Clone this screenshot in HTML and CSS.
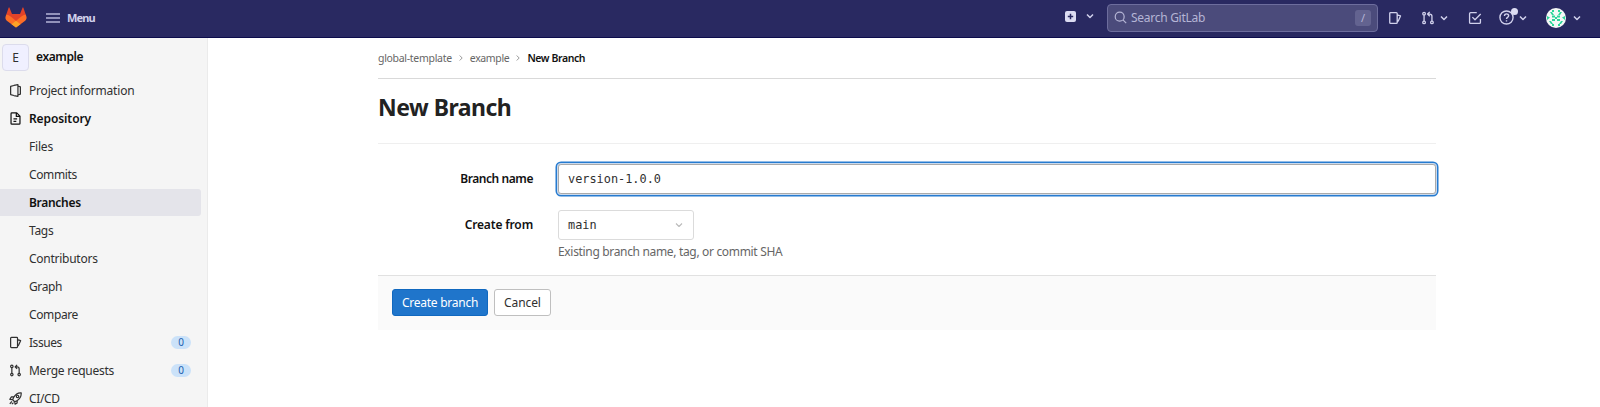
FILE: index.html
```html
<!DOCTYPE html>
<html lang="en">
<head>
<meta charset="utf-8">
<title>New Branch · example · GitLab</title>
<link rel="stylesheet" href="styles.css">
</head>
<body>
<svg class="sprite" aria-hidden="true">
  <symbol id="chevron" viewBox="0 0 16 16"><path d="M4 6l4 4 4-4"/></symbol>
  <symbol id="issues" viewBox="0 0 16 16"><path d="M3 1.800h6.500a1 1 0 0 1 1 1v10.400a1 1 0 0 1-1 1H3a1 1 0 0 1-1-1V2.800a1 1 0 0 1 1-1zM10.500 4.500l3.800 1.200-2.300 5.200-1.500 1.800"/></symbol>
  <symbol id="merge" viewBox="0 0 16 16"><circle cx="3.500" cy="3" r="1.500"/><circle cx="3.500" cy="13" r="1.500"/><circle cx="12.500" cy="13" r="1.500"/><path d="M3.500 4.500v7M12.500 11.500V6a2.500 2.500 0 0 0-2.500-2.500H8M10 1L7.500 3.500 10 6"/></symbol>
</svg>
<header class="navbar">
  <svg class="logo" viewBox="0 0 22 21">
    <path fill="#e24329" d="M1.300 7.600L3.600.7Q4 0 4.500.7L7 7h8L17.500.7q.5-.7.900 0l2.300 6.900L18 13l-7 7-7-7z"/>
    <path fill="#fc6d26" d="M1.300 7.400C4.500 8 7.500 10.500 11 14c3.500-3.500 6.500-6 9.700-6.600l.7 2.100c.5 1.700 0 3.200-1.200 4.200L11 20.500l-9.200-6.800C.6 12.700.1 11.200.6 9.500z"/>
    <path fill="#fca326" d="M11 13.800l4.500 3.400-4.500 3.400-4.500-3.400z"/>
  </svg>
  <svg class="burger" viewBox="0 0 14 10"><path d="M0 1h14M0 5h14M0 9h14"/></svg>
  <span class="menu">Menu</span>
  <div class="tools">
    <svg class="plus" viewBox="0 0 11 11"><rect width="11" height="11" rx="2" fill="#dcdcf2"/><path d="M5.500 2.800v5.400M2.800 5.500h5.400" stroke="#292961" stroke-width="1.500"/></svg>
    <svg class="icon chev c1"><use href="#chevron"/></svg>
    <div class="search">
      <svg class="icon glass" viewBox="0 0 16 16"><circle cx="7" cy="7" r="5.500"/><path d="M11 11l4 4"/></svg>
      <span class="hint">Search GitLab</span><kbd>/</kbd>
    </div>
    <svg class="icon i-issues"><use href="#issues"/></svg>
    <svg class="icon i-merge"><use href="#merge"/></svg>
    <svg class="icon chev c2"><use href="#chevron"/></svg>
    <svg class="icon i-todo" viewBox="0 0 16 16"><path d="M10 1.800H3a1.200 1.200 0 0 0-1.200 1.200v10A1.200 1.200 0 0 0 3 14.200h10a1.200 1.200 0 0 0 1.200-1.200V9M5 7l3 3 6.500-6.500"/></svg>
    <span class="help">
      <svg class="icon" viewBox="0 0 16 16"><circle cx="8" cy="8" r="7"/><path d="M5.800 6.300c0-3 4.600-2.800 4.500-.1C10.300 7.800 8 7.900 8 9.500M8 10.800v1.500"/></svg>
      <i class="dot"></i>
    </span>
    <svg class="icon chev c3"><use href="#chevron"/></svg>
    <svg class="avatar" viewBox="0 0 20 20"><circle cx="10" cy="10" r="10" fill="#f4f8f6"/><path fill="#2bd69a" d="M6 2h2v2H6zM12 2h2v2h-2zM4 4h2l2 3H6zM16 4h-2l-2 3h2zM1 8l3 1.500L1 12zM19 8l-3 1.500 3 2.500zM6 7.500h3v2H6zM11 7.500h3v2h-3zM6 11h3v2H6zM11 11h3v2h-3zM9 9h2v2H9zM3 13h2l2 3H5zM17 13h-2l-2 3h2zM6 16h2v2H6zM12 16h2v2h-2z"/></svg>
    <svg class="icon chev c4"><use href="#chevron"/></svg>
  </div>
</header>
<div class="page">
  <nav class="sidebar">
    <div class="project"><span class="tile">E</span><b>example</b></div>
    <a class="item"><svg class="icon" viewBox="0 0 16 16"><path d="M6 1.800L2 3v10l4 1.200M6 1.800l5-1V15.200l-5-1M11 2.500L14 3.500v9l-3 1"/></svg><span class="t-info">Project information</span></a>
    <a class="item bold"><svg class="icon" viewBox="0 0 16 16"><path d="M3.500 1h6l4 4v9a1 1 0 0 1-1 1h-9a1 1 0 0 1-1-1V2a1 1 0 0 1 1-1zM9 1v4.500h4.500M5.500 8.500H10M5.500 11.500H9"/></svg><span class="t-repo">Repository</span></a>
    <a class="item sub"><span class="t-files">Files</span></a>
    <a class="item sub"><span class="t-commits">Commits</span></a>
    <a class="item sub bold active"><span class="t-branches">Branches</span></a>
    <a class="item sub"><span class="t-tags">Tags</span></a>
    <a class="item sub"><span class="t-contrib">Contributors</span></a>
    <a class="item sub"><span class="t-graph">Graph</span></a>
    <a class="item sub"><span class="t-compare">Compare</span></a>
    <a class="item"><svg class="icon"><use href="#issues"/></svg><span class="t-issues">Issues</span><em>0</em></a>
    <a class="item"><svg class="icon"><use href="#merge"/></svg><span class="t-mr">Merge requests</span><em>0</em></a>
    <a class="item"><svg class="icon" viewBox="0 0 16 16"><path d="M15 1c-4-.3-7 1.500-9.500 6L4.500 9.500l2.500 2.500 2.500-1C13.500 8.500 15.300 5 15 1zM6 6H3L1 9l3.500.5M10 10.500v3L7.500 15 7 12M3.500 11.500L1 14.500M5.500 13l-2 2"/><circle cx="10.500" cy="5.500" r="1.500"/></svg><span class="t-ci">CI/CD</span></a>
  </nav>
  <main class="content">
    <div class="crumbs">
      <span class="t-global">global-template</span>
      <svg class="sep" viewBox="0 0 4 6"><path d="M.7.5L3.200 3 .7 5.500"/></svg>
      <span class="t-ex">example</span>
      <svg class="sep" viewBox="0 0 4 6"><path d="M.7.5L3.200 3 .7 5.500"/></svg>
      <b class="t-new">New Branch</b>
    </div>
    <h1>New Branch</h1>
    <form>
      <div class="row name">
        <label><span class="t-bname">Branch name</span></label>
        <div class="field focus">version-1.0.0</div>
      </div>
      <div class="row from">
        <label><span class="t-from">Create from</span></label>
        <div class="field select">main<svg class="icon"><use href="#chevron"/></svg></div>
      </div>
      <p class="note"><span class="t-note">Existing branch name, tag, or commit SHA</span></p>
      <div class="actions">
        <button type="button" class="btn primary"><span class="t-create">Create branch</span></button>
        <button type="button" class="btn"><span class="t-cancel">Cancel</span></button>
      </div>
    </form>
  </main>
</div>
</body>
</html>
```
FILE: styles.css
```css
* { box-sizing: border-box; }
body { margin: 0; height: 407px; overflow: hidden; background: #fff; color: #303030; font: 12px/16px "Noto Sans", "Open Sans", sans-serif; }
b, .bold { font-weight: 600; color: #111; }
span, b { white-space: nowrap; }
.sprite { position: absolute; width: 0; height: 0; }
.icon { width: 13px; height: 13px; flex: none; fill: none; stroke: currentColor; stroke-width: 1.5; stroke-linejoin: round; }
.navbar { height: 38px; background: #292961; border-bottom: 1px solid #0c0c4c; display: flex; align-items: center; padding: 0 0 2px 5px; color: #d1d1ec; }
.logo { width: 22px; height: 21px; }
.burger { width: 14px; height: 10px; margin-left: 19px; stroke: #b5b5d8; stroke-width: 1.3; }
.menu { margin-left: 7px; font-size: 11px; font-weight: 700; letter-spacing: -1px; letter-spacing: -.9px; }
.tools { margin-left: auto; display: flex; align-items: center; }
.plus { width: 11px; height: 11px; margin-top: -3px; }
.chev { width: 12px; height: 12px; stroke-width: 2; }
.c1 { margin: -3px 11px 0 8px; }
.search { width: 271px; height: 28px; border: 1px solid #6d6d9d; border-radius: 4px; background: #4b4b7b; display: flex; align-items: center; padding: 0 6px; color: #b5b5d5; }
.glass { width: 13px; height: 13px; }
.hint { margin-left: 4px; letter-spacing: -.28px; }
kbd { margin-left: auto; width: 16px; height: 16px; border-radius: 3px; background: #636390; text-align: center; font: 11px/16px "Noto Sans", sans-serif; }
.i-issues { margin-left: 10px; width: 14px; height: 14px; }
.i-merge { margin-left: 19px; width: 14px; height: 14px; }
.c2 { margin-left: 3px; }
.i-todo { margin-left: 18px; width: 14px; height: 14px; }
.help { margin-left: 17px; width: 15px; height: 15px; position: relative; }
.help .icon { display: block; width: 15px; height: 15px; }
.dot { position: absolute; left: 12px; top: -2px; width: 7px; height: 7px; border-radius: 50%; background: #dcdcf2; }
.c3 { margin-left: 3px; }
.avatar { width: 20px; height: 20px; margin-left: 17px; }
.c4 { margin: 0 17px 0 5px; }
.page { display: flex; height: 369px; }
.sidebar { width: 208px; flex: none; overflow: hidden; background: #f5f5f5; border-right: 1px solid #ebebeb; }
.project { display: flex; align-items: center; height: 38px; padding-left: 2px; }
.tile { width: 27px; height: 27px; border: 1px solid #dcdcec; border-radius: 4px; background: #f0f0ff; line-height: 25px; text-align: center; }
.project b { margin-left: 7px; letter-spacing: -.4px; }
.item { display: flex; align-items: center; width: 201px; height: 27px; margin-bottom: 1px; padding-left: 9px; border-radius: 0 3px 3px 0; }
.project + .item { margin-top: 1px; }
.item .icon + span { margin-left: 7px; }
.item em { margin: 0 10px 0 auto; width: 20px; height: 13px; border-radius: 7px; background: #cbe2f9; color: #1b5fb0; font: 10px/13px "Noto Sans", sans-serif; text-align: center; }
.sub { padding-left: 29px; }
.active { background: #e4e4ea; }
.t-info, .t-files { letter-spacing: -.2px; }
.t-repo { letter-spacing: -.1px; }
.t-commits, .t-graph, .t-compare, .t-ci { letter-spacing: -.38px; }
.t-branches, .t-tags { letter-spacing: -.3px; }
.t-contrib, .t-mr { letter-spacing: -.26px; }
.t-issues { letter-spacing: -.45px; }
.content { width: 1058px; margin-left: 170px; }
.crumbs { display: flex; align-items: center; height: 41px; border-bottom: 1px solid #d9d9d9; font-size: 10.500px; color: #666; }
.t-global { letter-spacing: -.3px; }
.t-ex { letter-spacing: -.35px; }
.t-new { letter-spacing: -.4px; }
.sep { width: 4px; height: 6px; margin: 0 7px; fill: none; stroke: #999; stroke-width: 1; }
h1 { margin: 0; height: 65px; padding-top: 13px; border-bottom: 1px solid #efefef; font-size: 23px; line-height: 30px; font-weight: 700; letter-spacing: -.5px; color: #222; }
.row { display: flex; align-items: center; height: 30px; }
.row label { width: 180px; padding-right: 25px; text-align: right; font-weight: 600; color: #111; }
.t-bname { letter-spacing: -.43px; }
.t-from { letter-spacing: -.15px; }
.name { margin-top: 20px; }
.from { margin-top: 16px; }
.field { height: 30px; border-radius: 3px; padding-left: 9px; font: 11.880px/28px "DejaVu Sans Mono", monospace; color: #303030; }
.focus { width: 878px; border: 1px solid #aaa; box-shadow: 0 0 0 1px #cbdaed, 0 0 0 2.500px #267bd0; }
.select { width: 136px; border: 1px solid #dbdbdb; display: flex; align-items: center; justify-content: space-between; padding-right: 8px; }
.select .icon { width: 12px; height: 12px; color: #bbb; }
.note { margin: 4px 0 0 180px; color: #666; }
.t-note { letter-spacing: -.33px; }
.t-create { letter-spacing: -.25px; }
.t-cancel { letter-spacing: -.1px; }
.actions { display: flex; gap: 6px; margin-top: 15px; height: 55px; padding: 13px 14px; background: #fafafa; border-top: 1px solid #e1e1e1; }
.btn { height: 27px; width: 57px; padding: 0; border: 1px solid #bfbfbf; border-radius: 3px; background: #fff; color: #303030; font: 12px/24px "Noto Sans", sans-serif; }
.primary { width: 96px; border-color: #1068bf; background: #1f75cb; color: #fff; }
```
